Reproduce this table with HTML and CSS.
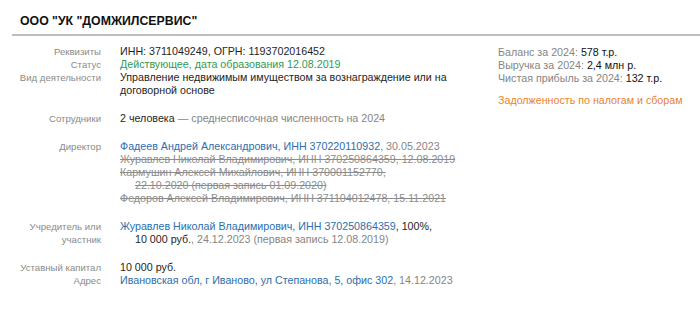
FILE: index.html
```html
<!DOCTYPE html>
<html lang="ru">
<head>
<meta charset="utf-8">
<title>ООО "УК "ДОМЖИЛСЕРВИС"</title>
<link rel="stylesheet" href="styles.css">
</head>
<body>
<header class="header">
  <h1 class="title">ООО "УК "ДОМЖИЛСЕРВИС"</h1>
</header>
<div class="rule"></div>
<main class="main">
  <section class="info">
    <div class="group">
      <div class="label">Реквизиты</div>
      <div class="value">ИНН: 3711049249, ОГРН: 1193702016452</div>
      <div class="label">Статус</div>
      <div class="value green">Действующее, дата образования 12.08.2019</div>
      <div class="label">Вид деятельности</div>
      <div class="value">Управление недвижимым имуществом за вознаграждение или на договорной основе</div>
    </div>
    <div class="group">
      <div class="label">Сотрудники</div>
      <div class="value">2 человека <span class="muted">— среднесписочная численность на 2024</span></div>
    </div>
    <div class="group">
      <div class="label">Директор</div>
      <div class="value">
        <div class="entry"><a class="link">Фадеев Андрей Александрович, ИНН 370220110932</a><span class="muted">, 30.05.2023</span></div>
        <div class="entry old">Журавлев Николай Владимирович, ИНН 370250864359, <span class="nowrap">12.08.2019</span></div>
        <div class="entry old">Кармушин Алексей Михайлович, ИНН 370001152770, <span class="nowrap">22.10.2020 (первая запись 01.09.2020)</span></div>
        <div class="entry old">Федоров Алексей Владимирович, ИНН 371104012478, <span class="nowrap">15.11.2021</span></div>
      </div>
    </div>
    <div class="group">
      <div class="label">Учредитель или участник</div>
      <div class="value">
        <div class="entry"><a class="link">Журавлев Николай Владимирович, ИНН 370250864359</a>, 100%, <span class="nowrap">10&nbsp;000&nbsp;руб.<span class="muted">, 24.12.2023 (первая запись 12.08.2019)</span></span></div>
      </div>
    </div>
    <div class="group">
      <div class="label">Уставный капитал</div>
      <div class="value">10 000 руб.</div>
      <div class="label">Адрес</div>
      <div class="value"><a class="link">Ивановская обл, г Иваново, ул Степанова, 5, офис 302</a><span class="muted">, 14.12.2023</span></div>
    </div>
  </section>
  <aside class="summary">
    <div class="stat"><span class="muted">Баланс за 2024:</span> 578 т.р.</div>
    <div class="stat"><span class="muted">Выручка за 2024:</span> 2,4 млн р.</div>
    <div class="stat"><span class="muted">Чистая прибыль за 2024:</span> 132 т.р.</div>
    <div class="debt">Задолженность по налогам и сборам</div>
  </aside>
</main>
</body>
</html>
```
FILE: styles.css
```css
body {
  margin: 0;
  background: #fff;
  font-family: "Liberation Sans", Arial, sans-serif;
  color: #1e1e1e;
}
.header {
  padding: 14px 0 0 20px;
}
.title {
  margin: 0;
  font-size: 12.3px;
  line-height: 15px;
  font-weight: bold;
  color: #111;
}
.rule {
  margin: 5px 0 0 12px;
  height: 2px;
  background: #bdbdbd;
}
.main {
  display: flex;
  padding-top: 9px;
}
.info {
  width: 460px;
}
.group {
  display: grid;
  grid-template-columns: 101px 340px;
  column-gap: 19px;
  margin-bottom: 15px;
}
.label {
  text-align: right;
  font-size: 9.6px;
  line-height: 13px;
  color: #8a8a8a;
}
.value {
  font-size: 10.7px;
  line-height: 13px;
  color: #1e1e1e;
}
.entry {
  padding-left: 15px;
  text-indent: -15px;
}
.nowrap {
  white-space: nowrap;
}
.green {
  color: #2f9a55;
}
.muted {
  color: #858585;
}
.link {
  color: #2d6ead;
  text-decoration: none;
}
.old {
  color: #8c8c8c;
  text-decoration: line-through;
}
.summary {
  margin-left: 38px;
  padding-top: 1px;
  font-size: 10.7px;
  line-height: 13px;
  color: #111;
}
.debt {
  margin-top: 9px;
  color: #e8842f;
}
```
